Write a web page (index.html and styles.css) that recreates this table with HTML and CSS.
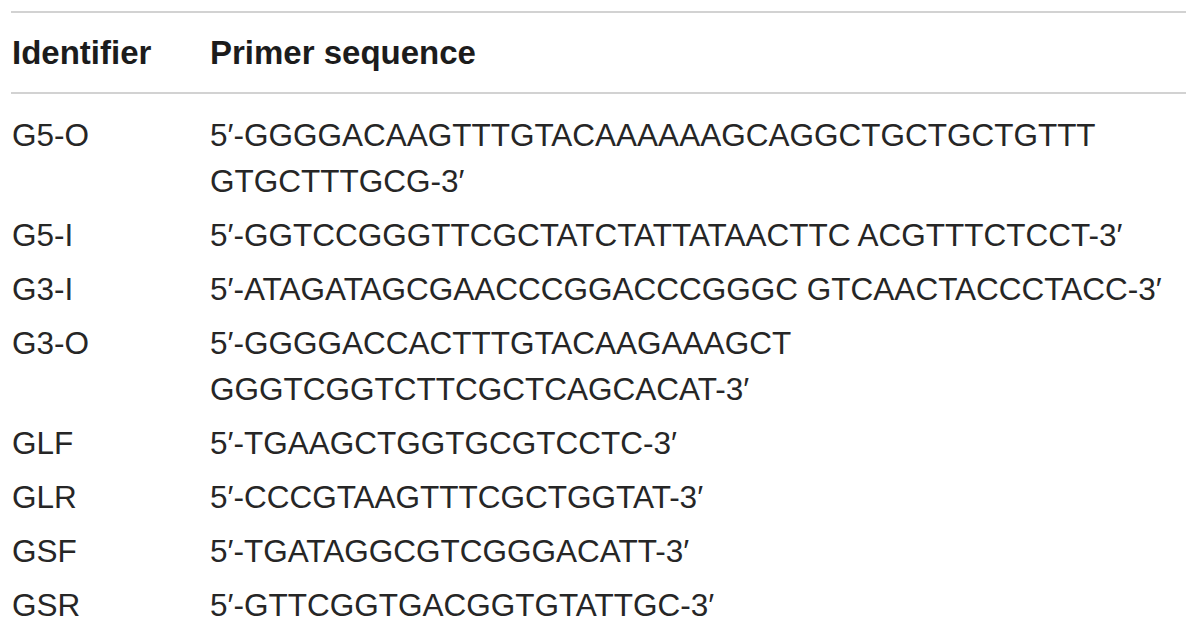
FILE: index.html
```html
<!DOCTYPE html>
<html lang="en">
<head>
<meta charset="utf-8">
<title>Primer sequences</title>
<link rel="stylesheet" href="styles.css">
</head>
<body>
<div class="table">
  <div class="head">
    <div class="cell id">Identifier</div>
    <div class="cell seq">Primer sequence</div>
  </div>
  <div class="body">
    <div class="row"><div class="cell id">G5-O</div><div class="cell seq">5′-GGGGACAAGTTTGTACAAAAAAGCAGGCTGCTGCTGTTT GTGCTTTGCG-3′</div></div>
    <div class="row"><div class="cell id">G5-I</div><div class="cell seq">5′-GGTCCGGGTTCGCTATCTATTATAACTTC ACGTTTCTCCT-3′</div></div>
    <div class="row"><div class="cell id">G3-I</div><div class="cell seq">5′-ATAGATAGCGAACCCGGACCCGGGC GTCAACTACCCTACC-3′</div></div>
    <div class="row"><div class="cell id">G3-O</div><div class="cell seq">5′-GGGGACCACTTTGTACAAGAAAGCT GGGTCGGTCTTCGCTCAGCACAT-3′</div></div>
    <div class="row"><div class="cell id">GLF</div><div class="cell seq">5′-TGAAGCTGGTGCGTCCTC-3′</div></div>
    <div class="row"><div class="cell id">GLR</div><div class="cell seq">5′-CCCGTAAGTTTCGCTGGTAT-3′</div></div>
    <div class="row"><div class="cell id">GSF</div><div class="cell seq">5′-TGATAGGCGTCGGGACATT-3′</div></div>
    <div class="row"><div class="cell id">GSR</div><div class="cell seq">5′-GTTCGGTGACGGTGTATTGC-3′</div></div>
  </div>
</div>
</body>
</html>
```
FILE: styles.css
```css
html, body {
  margin: 0;
  padding: 0;
  background: #ffffff;
}

body {
  font-family: "Liberation Sans", Arial, Helvetica, sans-serif;
  color: #262626;
}

.table {
  margin: 11px 0 0 11px;
  width: 1175px;
}

.head,
.row {
  display: grid;
  grid-template-columns: 199px 1fr;
}

.head {
  border-top: 2px solid #d2d2d2;
  border-bottom: 2px solid #d2d2d2;
  height: 79px;
  align-items: center;
  font-weight: 700;
  font-size: 33px;
  line-height: 40px;
  color: #1c1c1c;
}

.head .cell {
  padding-top: 1px;
}

.body {
  padding-top: 14px;
  font-size: 31.5px;
  line-height: 46px;
}

.row {
  padding: 4px 0;
}

.cell.id {
  padding-left: 1px;
}
```
